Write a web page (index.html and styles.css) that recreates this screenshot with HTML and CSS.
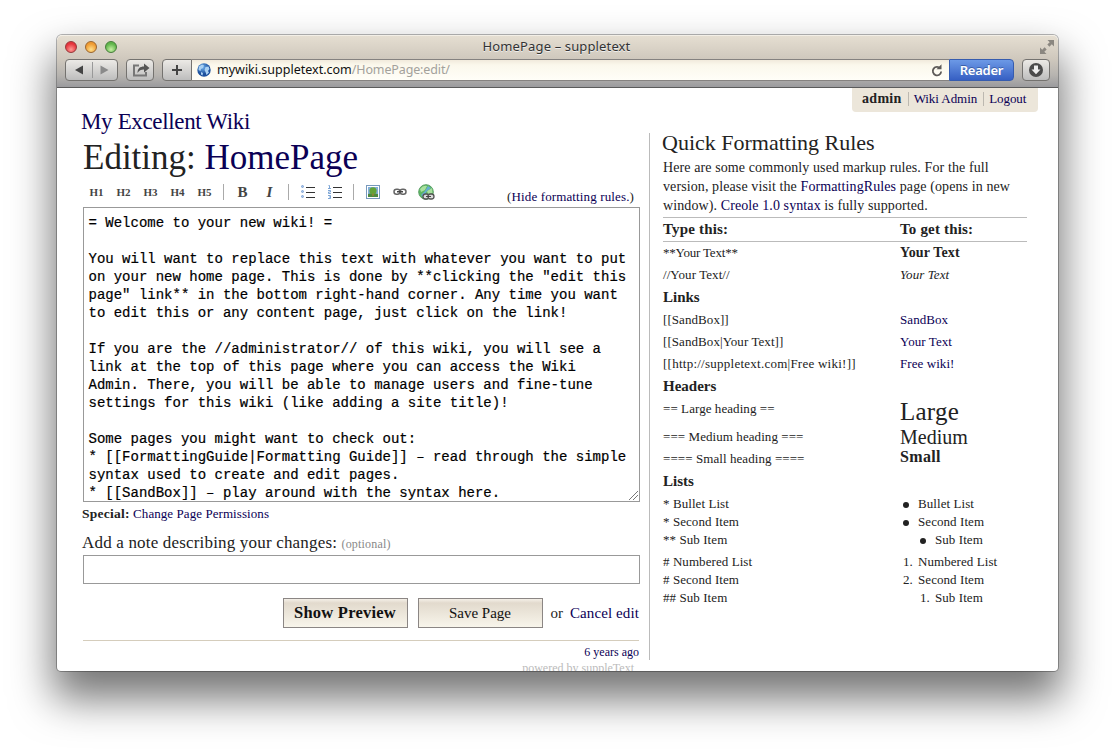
FILE: index.html
```html
<!DOCTYPE html>
<html lang="en">
<head>
<meta charset="utf-8">
<title>HomePage – suppletext</title>
<link rel="stylesheet" href="styles.css">
</head>
<body>
<div class="window">
  <header class="chrome">
    <div class="titlebar">
      <div class="lights"><i class="light red"></i><i class="light amber"></i><i class="light green"></i></div>
      <span class="window-title">HomePage – suppletext</span>
      <svg class="expand" width="14" height="14" viewBox="0 0 14 14"><path d="M7.5 0H14V6.500L11.800 4.300 9.400 6.700 7.300 4.600 9.700 2.200ZM6.500 14H0V7.500L2.200 9.700 4.600 7.300 6.700 9.400 4.300 11.800Z" fill="#8b8780"/></svg>
    </div>
    <div class="toolbar">
      <div class="tool nav">
        <svg width="51" height="20" viewBox="0 0 51 20"><path d="M17 5.500V14.500L9 10Z" fill="#444"/><path d="M34.500 5.500V14.500L42.500 10Z" fill="#8a8a8a"/><path d="M26.500 2V18" stroke="#999"/></svg>
      </div>
      <div class="tool share">
        <svg width="26" height="20" viewBox="0 0 26 20"><path d="M12 5.500H7V15.500H19V12" fill="none" stroke="#777" stroke-width="2"/><path d="M10.500 13C10.500 8.500 13 6.500 17 6.500V3.500L22.500 8 17 12.500V9.500C14 9.500 12 10.500 10.500 13Z" fill="#555"/></svg>
      </div>
      <div class="tool plus">
        <svg width="28" height="20" viewBox="0 0 28 20"><path d="M14 5V15M9 10H19" stroke="#444" stroke-width="2"/></svg>
      </div>
      <div class="address">
        <svg width="14" height="14" viewBox="0 0 14 14"><defs><radialGradient id="sea" cx=".4" cy=".3"><stop offset="0" stop-color="#6fb0ec"/><stop offset="1" stop-color="#1b4f9c"/></radialGradient></defs><circle cx="7" cy="7" r="6.700" fill="url(#sea)"/><path d="M2 3.500 5 1.500 7 2.500 6 5 4 6 3.500 8 1.500 7ZM8.500 4 11.500 3.500 12.500 6 11 8 12 9.500 9.500 12 8.500 9 7.500 7ZM4 9 6 10 5.500 12.500 4 11.500Z" fill="#a9d0f2"/></svg>
        <span class="host">mywiki.suppletext.com</span><span class="path">/HomePage:edit/</span>
        <svg class="reload" width="12" height="13" viewBox="0 0 12 13"><path d="M9.300 4.500A4.200 4.200 0 1 0 10.200 7.500" fill="none" stroke="#5d5a58" stroke-width="1.800"/><path d="M5.500 5.300H10.500V.300Z" fill="#5d5a58"/></svg>
      </div>
      <div class="reader">Reader</div>
      <div class="tool download">
        <svg width="26" height="20" viewBox="0 0 26 20"><circle cx="13" cy="10" r="7" fill="#4b4b4b"/><path d="M11 5.500H15V9.500H17.500L13 14.300 8.500 9.500H11Z" fill="#eee"/></svg>
      </div>
    </div>
  </header>

  <nav class="account"><b>admin</b><a class="sep">Wiki Admin</a><a class="sep">Logout</a></nav>

  <div class="columns">
    <main class="editor">
      <a class="site">My Excellent Wiki</a>
      <h1>Editing: <a>HomePage</a></h1>
      <div class="format-bar">
        <div class="buttons">
          <span class="hn">H1</span><span class="hn">H2</span><span class="hn">H3</span><span class="hn">H4</span><span class="hn">H5</span>
          <i class="bar"></i>
          <span class="bold">B</span><span class="ital">I</span>
          <i class="bar"></i>
          <span><svg width="14" height="14" viewBox="0 0 14 14"><g fill="#a9c4e8" stroke="#7ea3d6"><rect x=".5" y=".5" width="2" height="2" rx="1"/><rect x=".5" y="5.500" width="2" height="2" rx="1"/><rect x=".5" y="10.500" width="2" height="2" rx="1"/></g><path d="M5 2.500H14M5 7.500H14M5 12.500H14" stroke="#333"/></svg></span>
          <span><svg width="14" height="14" viewBox="0 0 14 14"><path d="M.5 .5H1.500V3.500M0 3.500H3M0 5.500H2.500V7H.5V8.500H3M0 10.500H2.500V13.500H0M1 12H2.500" fill="none" stroke="#6e9bd0" stroke-width=".9"/><path d="M5 2.500H14M5 7.500H14M5 12.500H14" stroke="#333"/></svg></span>
          <i class="bar"></i>
          <span><svg width="14" height="14" viewBox="0 0 14 14"><rect x=".5" y=".5" width="13" height="13" fill="#fff" stroke="#7799bd"/><rect x="2" y="2" width="10" height="10" fill="#82aed8"/><path d="M2 9 6 8 12 9V12H2Z" fill="#4e8a40"/><circle cx="7" cy="5.800" r="3.600" fill="#62a33a"/><path d="M6.500 8.500H7.500V11H6.500Z" fill="#b77a35"/></svg></span>
          <span><svg width="14" height="8" viewBox="0 0 14 8"><g fill="none" stroke="#666" stroke-width="1.500"><rect x="1" y="1.200" width="6" height="5" rx="2.500"/><rect x="7" y="1.200" width="6" height="5" rx="2.500"/></g><path d="M4 3.700H10" stroke="#444" stroke-width="1.400"/></svg></span>
          <span><svg width="17" height="16" viewBox="0 0 17 16"><circle cx="8" cy="8" r="7.300" fill="#5cb862" stroke="#5a9f65"/><path d="M2 5Q5 1 9 2L7 6 3 8ZM9 7 14 4 14.500 9 10 10Z" fill="#a9e09e"/><path d="M10 2 13 4 9 7 5 13 3 11 7 7Z" fill="#66add3"/><g fill="#ddd" stroke="#555" stroke-width="1.300"><rect x="5" y="10" width="6" height="5" rx="2.500"/><rect x="10" y="10" width="6" height="5" rx="2.500"/></g><path d="M8 12.500H13" stroke="#444"/></svg></span>
        </div>
        <a class="hide-rules"><span>(</span>Hide formatting rules.<span>)</span></a>
      </div>
      <div class="source">= Welcome to your new wiki! =

You will want to replace this text with whatever you want to put
on your new home page. This is done by **clicking the "edit this
page" link** in the bottom right-hand corner. Any time you want
to edit this or any content page, just click on the link!

If you are the //administrator// of this wiki, you will see a
link at the top of this page where you can access the Wiki
Admin. There, you will be able to manage users and fine-tune
settings for this wiki (like adding a site title)!

Some pages you might want to check out:
* [[FormattingGuide|Formatting Guide]] – read through the simple
syntax used to create and edit pages.
* [[SandBox]] – play around with the syntax here.<svg class="grip" width="9" height="9" viewBox="0 0 9 9"><path d="M0 9 9 0M4 9 9 4" stroke="#777"/></svg></div>
      <div class="special"><b>Special:</b> <a>Change Page Permissions</a></div>
      <label class="note" for="note">Add a note describing your changes: <small>(optional)</small></label>
      <input class="note-input" id="note" type="text">
      <div class="actions">
        <button class="btn preview">Show Preview</button>
        <button class="btn">Save Page</button>
        <span class="or">or</span><a class="cancel">Cancel edit</a>
      </div>
      <div class="age"><a>6 years ago</a></div>
      <div class="powered">powered by suppleText</div>
    </main>

    <aside class="rules">
      <h2>Quick Formatting Rules</h2>
      <p class="intro">Here are some commonly used markup rules. For the full<br>version, please visit the <a>FormattingRules</a> page (opens in new<br>window). <a>Creole 1.0 syntax</a> is fully supported.</p>
      <div class="row head"><span>Type this:</span><span>To get this:</span></div>
      <div class="row first"><span class="stars">**Your Text**</span><b>Your Text</b></div>
      <div class="row"><span>//Your Text//</span><em>Your Text</em></div>
      <div class="group">Links</div>
      <div class="row"><span>[[SandBox]]</span><a>SandBox</a></div>
      <div class="row"><span>[[SandBox|Your Text]]</span><a>Your Text</a></div>
      <div class="row"><span class="long">[[http://suppletext.com|Free wiki!]]</span><a>Free wiki!</a></div>
      <div class="group">Headers</div>
      <div class="row large"><span>== Large heading ==</span><span class="ex">Large</span></div>
      <div class="row medium"><span>=== Medium heading ===</span><span class="ex">Medium</span></div>
      <div class="row small"><span>==== Small heading ====</span><span class="ex">Small</span></div>
      <div class="group lists">Lists</div>
      <div class="row list"><span>* Bullet List<br>* Second Item<br>** Sub Item</span>
        <ul><li><i class="dot"></i>Bullet List</li><li><i class="dot"></i>Second Item</li><li class="sub"><i class="dot"></i>Sub Item</li></ul></div>
      <div class="row list"><span># Numbered List<br># Second Item<br>## Sub Item</span>
        <ul><li><i class="num">1.</i>Numbered List</li><li><i class="num">2.</i>Second Item</li><li class="sub"><i class="num">1.</i>Sub Item</li></ul></div>
    </aside>
  </div>
</div>
</body>
</html>
```
FILE: styles.css
```css
* { box-sizing: border-box; }
body { margin: 0; height: 750px; overflow: hidden; background: #fff; padding: 35px 0 0 57px; font: 13px/18px "Liberation Serif", serif; color: #222; }
a { color: #0b0055; }
svg { display: block; flex: none; }
h1, h2, p, ul { margin: 0; padding: 0; font-weight: 400; }

.window { width: 1001px; height: 636px; overflow: hidden; background: #fff; border-radius: 5px 5px 4px 4px; box-shadow: 0 0 0 1px rgba(0,0,0,.28), 0 24px 42px 4px rgba(0,0,0,.54); }

/* browser frame */
.chrome { height: 53px; border-bottom: 1px solid #5b5b5b; border-radius: 5px 5px 0 0; background: linear-gradient(#e6dfd2, #cfc8bd 24px, #b7b4b0 40px, #9b9b9e); box-shadow: inset 0 1px #f3efe7; font-family: "Noto Sans", sans-serif; }
.titlebar { display: flex; align-items: center; height: 23px; padding: 0 4px 0 8px; }
.lights { display: flex; gap: 8px; width: 100px; }
.light { width: 12px; height: 12px; border-radius: 50%; border: 1px solid; }
.red { background: radial-gradient(circle at 50% 75%, #ff9a94, #e5343c 65%); border-color: #96373a; }
.amber { background: radial-gradient(circle at 50% 75%, #ffe08a, #ef9a31 65%); border-color: #99652f; }
.green { background: radial-gradient(circle at 50% 75%, #c7f0a4, #60b54b 65%); border-color: #467c3a; }
.window-title { flex: 1; text-align: center; font-size: 13px; letter-spacing: .140px; color: #333; text-shadow: 0 1px #eee; padding-right: 93px; margin-top: -2px; }
.expand { margin-left: -1px; }
.toolbar { display: flex; padding: 1px 8px 0; height: 24px; }
.tool { height: 22px; border: 1px solid #74726f; border-radius: 4px; background: linear-gradient(#eceae6, #bdbdbd); }
.nav { width: 53px; }
.share { width: 28px; margin-left: 8px; }
.plus { width: 30px; margin-left: 8px; border-radius: 4px 0 0 4px; }
.address { flex: 1; display: flex; align-items: center; height: 22px; border: solid #858280; border-width: 1px 0; background: linear-gradient(#f1eadc, #fbf8ec 5px, #fffef8); font-size: 12.500px; padding: 0 5px; }
.host { color: #111; margin-left: 6px; }
.path { color: #a3a19c; letter-spacing: -.130px; }
.reload { margin-left: auto; margin-right: 1px; }
.reader { width: 65px; height: 22px; border: 1px solid #365cae; border-radius: 0 4px 4px 0; background: linear-gradient(#6c99e6, #365fc3); color: #fff; text-align: center; font: 600 13px/20px "Noto Sans", sans-serif; letter-spacing: -.250px; text-shadow: 0 -1px #3b5fa8; }
.download { width: 28px; margin-left: 8px; }

.account { display: flex; align-items: center; width: 186px; height: 24px; margin: 0 20px 0 auto; padding: 0 0 2px 10px; background: #ece6da; border-radius: 0 0 4px 4px; line-height: 14px; }
.account b { font-size: 14px; letter-spacing: .300px; }
.account a { letter-spacing: -.060px; }
.sep { border-left: 1px solid #bcb8b0; margin-left: 6px; padding-left: 5px; }

.columns { display: flex; margin-top: -3px; }

/* editor column */
.editor { width: 557px; margin-left: 25px; display: flex; flex-direction: column; }
.site { font-size: 23px; line-height: 26px; letter-spacing: -.350px; margin-left: -1px; }
h1 { font-size: 35px; line-height: 40px; margin-top: 3px; margin-left: 1px; white-space: nowrap; }
.format-bar { display: flex; justify-content: space-between; height: 30px; }
.buttons { display: flex; align-items: center; height: 24px; margin-top: 2px; }
.buttons span { width: 27px; display: flex; justify-content: center; }
.hn { font-size: 11px; font-weight: 700; color: #444; }
.hn:first-child { margin-left: 1px; }
.bar { width: 1px; height: 16px; background: #aaa; margin: 0 5px; }
.bold { font-size: 15px; font-weight: 700; color: #444; }
.ital { font-size: 15px; font-style: italic; font-weight: 700; color: #444; }
.hide-rules { letter-spacing: .130px; margin: 10px 5px 0 0; }
.hide-rules span { color: #222; }
.source { position: relative; width: 557px; height: 295px; border: 1px solid #999; margin: -1px 0 0 1px; padding: 6px 0 0 4.500px; overflow: hidden; white-space: pre; font: 14px/18px "Liberation Mono", monospace; -webkit-text-stroke: .2px #000; color: #000; }
.grip { position: absolute; right: 1px; bottom: 1px; }
.special { margin-top: 3px; letter-spacing: .070px; }
.special b { font-size: 13.500px; letter-spacing: .250px; }
.note { font-size: 17px; line-height: 22px; margin-top: 9px; letter-spacing: .180px; }
.note small { font-size: 12px; letter-spacing: .170px; color: #888; }
.note-input { height: 29px; width: 557px; margin: 0 0 0 1px; border: 1px solid #999; padding: 0; }
.actions { display: flex; align-items: center; justify-content: flex-end; height: 30px; margin: 14px 0 12px; font-size: 15px; }
.btn { width: 125px; height: 30px; padding: 0; margin-right: 10px; border: 1px solid #8b8684; border-radius: 0; background: linear-gradient(#f4f0e8, #e2dacd 4px, #f8f5eb); font: 15px/20px "Liberation Serif", serif; color: #111; }
.preview { font-size: 16.500px; font-weight: 700; letter-spacing: .240px; }
.or { margin: 0 7px 0 -2px; }
.cancel { letter-spacing: .100px; }
.age { border-top: 1px solid #d5cdbc; margin-left: 1px; padding-top: 3px; text-align: right; font-size: 12px; line-height: 17px; }
.powered { margin-right: 5px; text-align: right; color: #bbb; font-size: 12px; line-height: 14px; }

/* formatting rules column */
.rules { width: 378px; height: 527px; margin: 24px 0 0 10px; padding-left: 13px; border-left: 1px solid #bbb; }
h2 { font-size: 22px; line-height: 22px; margin: -1px 0 4px -1px; }
.intro { font-size: 14px; line-height: 19px; letter-spacing: .100px; height: 59px; white-space: nowrap; }
.row { display: grid; grid-template-columns: 237px 127px; line-height: 22px; height: 22px; letter-spacing: .070px; }
.row b { font-size: 14px; letter-spacing: .150px; }
.stars { letter-spacing: -.200px; }
.long { letter-spacing: .250px; }
.head { height: 25px; line-height: 23px; border: solid #bbb; border-width: 1px 0; font-size: 15px; font-weight: 700; letter-spacing: .180px; }
.group { height: 23px; line-height: 23px; font-size: 15px; font-weight: 700; letter-spacing: 0; }
.ex { white-space: nowrap; }
.large { height: 28px; }
.large .ex { font-size: 25px; line-height: 28px; letter-spacing: .230px; }
.medium .ex { font-size: 20px; letter-spacing: 0; }
.small .ex { font-size: 16px; line-height: 18px; font-weight: 700; letter-spacing: .350px; }
.list { height: 58px; line-height: 18px; padding-top: 2px; }
.list ul { list-style: none; }
.list li { display: flex; align-items: center; }
.dot { width: 6px; height: 6px; border-radius: 50%; background: #222; margin: 2px 9px 0 3px; }
.num { width: 14px; margin-right: 4px; padding-left: 3px; font-style: normal; }
.list .sub { padding-left: 17px; }
```
